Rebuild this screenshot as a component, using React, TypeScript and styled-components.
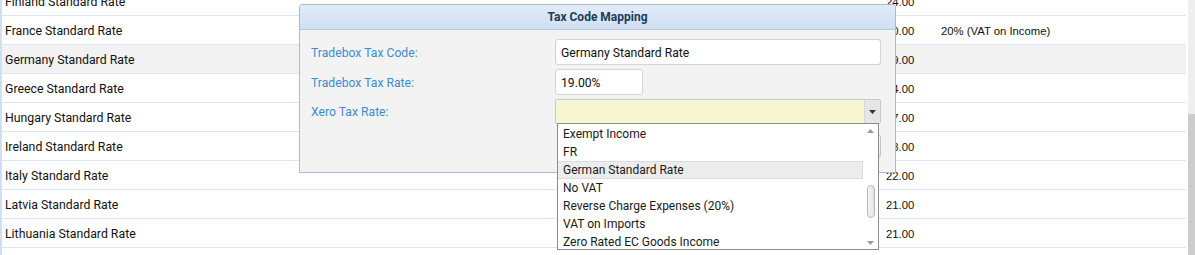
import React from "react";
import styled, { createGlobalStyle } from "styled-components";

const Global = createGlobalStyle`
  html, body { margin: 0; padding: 0; background: #fff; overflow: hidden; }
  body { font-family: Roboto, "Liberation Sans", Arial, sans-serif; }
  * { box-sizing: border-box; }
`;

const Page = styled.div`
  position: relative;
  width: 1195px;
  height: 255px;
  overflow: hidden;
  display: flex;
  gap: 2px;
`;

const Grid = styled.div`
  flex: 1;
  margin-top: -13px;
  border-left: 2px solid #d3def0;
`;

const Row = styled.div<{ $selected?: boolean }>`
  display: grid;
  grid-template-columns: 882px 55px 1fr;
  align-items: center;
  height: 29px;
  padding-top: 1px;
  border-bottom: 1px solid #dce6f3;
  background: ${(p) => (p.$selected ? "#f2f2f2" : "#fff")};
`;

const NameCell = styled.div`
  padding-left: 3px;
  font-family: Roboto, sans-serif;
  font-size: 12.3px;
  color: #111;
  white-space: nowrap;
`;

const NumCell = styled.div`
  padding-left: 2px;
  font-family: "Liberation Sans", Arial, sans-serif;
  font-size: 11.3px;
  color: #111;
  white-space: nowrap;
`;

const PageScroll = styled.div`
  width: 7px;
  display: flex;
  flex-direction: column;
`;

const Track = styled.div`
  height: 114px;
  background: #efefef;
`;

const Thumb = styled.div`
  flex: 1;
  background: #cccccc;
`;

const Dialog = styled.div`
  position: absolute;
  left: 299px;
  top: 4px;
  width: 597px;
  height: 169px;
  border: 1px solid #aabbd1;
  border-radius: 3px 3px 0 0;
  background: #f3f3f3;
  display: flex;
  flex-direction: column;
`;

const Header = styled.div`
  height: 25px;
  display: flex;
  align-items: center;
  justify-content: center;
  background: linear-gradient(#e2ecf8, #cfdff2);
  border-bottom: 1px solid #b8c8dc;
  border-radius: 2px 2px 0 0;
  font-family: Roboto, sans-serif;
  font-weight: 700;
  font-size: 12px;
  color: #223a56;
`;

const Body = styled.div`
  padding: 9px 14px 14px 11px;
  display: flex;
  flex-direction: column;
`;

const Form = styled.div`
  display: grid;
  grid-template-columns: 244px 1fr;
  row-gap: 4px;
  align-items: center;
`;

const Label = styled.div`
  padding-top: 1px;
  font-family: Roboto, sans-serif;
  font-size: 12.2px;
  color: #3d8bd1;
`;

const Input = styled.div<{ $w?: number }>`
  height: 26px;
  width: ${(p) => (p.$w ? `${p.$w}px` : "100%")};
  background: #fff;
  border: 1px solid #d4d4d4;
  border-radius: 3px;
  display: flex;
  align-items: center;
  padding: 1px 0 0 5px;
  font-family: Roboto, sans-serif;
  font-size: 12.2px;
  color: #111;
`;

const SelectWrap = styled.div`
  position: relative;
  height: 25px;
`;

const SelectBox = styled.div`
  height: 25px;
  display: flex;
  background: #f7f7d1;
  border: 1px solid #c8c8c8;
  border-radius: 2px;
`;

const SelectValue = styled.div`
  flex: 1;
`;

const SelectButton = styled.div`
  width: 16px;
  background: #e6e6e6;
  border-left: 1px solid #d8d8d8;
  display: flex;
  align-items: center;
  justify-content: center;
`;

const List = styled.div`
  position: absolute;
  top: 24px;
  left: 2px;
  width: 322px;
  height: 127px;
  background: #fff;
  border: 1px solid #8c8c8c;
  display: flex;
  z-index: 2;
`;

const Items = styled.div`
  flex: 1;
  padding-top: 1px;
`;

const Item = styled.div<{ $hl?: boolean }>`
  height: 18px;
  display: flex;
  align-items: center;
  padding-left: 5px;
  font-family: Roboto, sans-serif;
  font-size: 12px;
  color: #1a1a1a;
  white-space: nowrap;
  background: ${(p) => (p.$hl ? "#ececec" : "transparent")};
  border: 1px solid ${(p) => (p.$hl ? "#dcdcdc" : "transparent")};
  border-left: none;
`;

const ListScroll = styled.div`
  width: 15px;
  display: flex;
  flex-direction: column;
  align-items: center;
  padding: 5px 0 4px;
`;

const ScrollThumb = styled.div`
  width: 8px;
  height: 33px;
  margin-top: 52px;
  border: 1px solid #b8b8b8;
  border-radius: 4px;
  background: linear-gradient(90deg, #f4f4f4, #e4e4e4);
`;

const Spacer = styled.div`
  flex: 1;
`;

const ButtonRow = styled.div`
  margin-top: 10px;
  display: flex;
  justify-content: flex-end;
`;

const Button = styled.div`
  height: 24px;
  width: 70px;
  border: 1px solid #c4c4c4;
  border-radius: 3px;
  background: linear-gradient(#fafafa, #e8e8e8);
  display: flex;
  align-items: center;
  justify-content: center;
  font-family: Roboto, sans-serif;
  font-size: 12px;
  color: #333;
`;

const Tri = ({ up, color = "#333" }: { up?: boolean; color?: string }) => (
  <svg width="7" height="4" viewBox="0 0 7 4">
    <polygon points={up ? "0,4 7,4 3.5,0" : "0,0 7,0 3.5,4"} fill={color} />
  </svg>
);

const rows = [
  { name: "Finland Standard Rate", rate: "24.00", xero: "" },
  { name: "France Standard Rate", rate: "20.00", xero: "20% (VAT on Income)" },
  { name: "Germany Standard Rate", rate: "19.00", xero: "", selected: true },
  { name: "Greece Standard Rate", rate: "24.00", xero: "" },
  { name: "Hungary Standard Rate", rate: "27.00", xero: "" },
  { name: "Ireland Standard Rate", rate: "23.00", xero: "" },
  { name: "Italy Standard Rate", rate: "22.00", xero: "" },
  { name: "Latvia Standard Rate", rate: "21.00", xero: "" },
  { name: "Lithuania Standard Rate", rate: "21.00", xero: "" },
  { name: "", rate: "", xero: "" },
];

const options = [
  "Exempt Income",
  "FR",
  "German Standard Rate",
  "No VAT",
  "Reverse Charge Expenses (20%)",
  "VAT on Imports",
  "Zero Rated EC Goods Income",
];

export default function App() {
  return (
    <>
      <Global />
      <Page>
        <Grid>
          {rows.map((r, i) => (
            <Row key={i} $selected={r.selected}>
              <NameCell>{r.name}</NameCell>
              <NumCell>{r.rate}</NumCell>
              <NumCell>{r.xero}</NumCell>
            </Row>
          ))}
        </Grid>
        <PageScroll>
          <Track />
          <Thumb />
        </PageScroll>
        <Dialog>
          <Header>Tax Code Mapping</Header>
          <Body>
            <Form>
              <Label>Tradebox Tax Code:</Label>
              <Input>Germany Standard Rate</Input>
              <Label>Tradebox Tax Rate:</Label>
              <Input $w={88}>19.00%</Input>
              <Label>Xero Tax Rate:</Label>
              <SelectWrap>
                <SelectBox>
                  <SelectValue />
                  <SelectButton>
                    <Tri />
                  </SelectButton>
                </SelectBox>
                <List>
                  <Items>
                    {options.map((o) => (
                      <Item key={o} $hl={o === "German Standard Rate"}>
                        {o}
                      </Item>
                    ))}
                  </Items>
                  <ListScroll>
                    <Tri up color="#9a9a9a" />
                    <ScrollThumb />
                    <Spacer />
                    <Tri color="#9a9a9a" />
                  </ListScroll>
                </List>
              </SelectWrap>
            </Form>
            <ButtonRow>
              <Button>Save</Button>
            </ButtonRow>
          </Body>
        </Dialog>
      </Page>
    </>
  );
}
